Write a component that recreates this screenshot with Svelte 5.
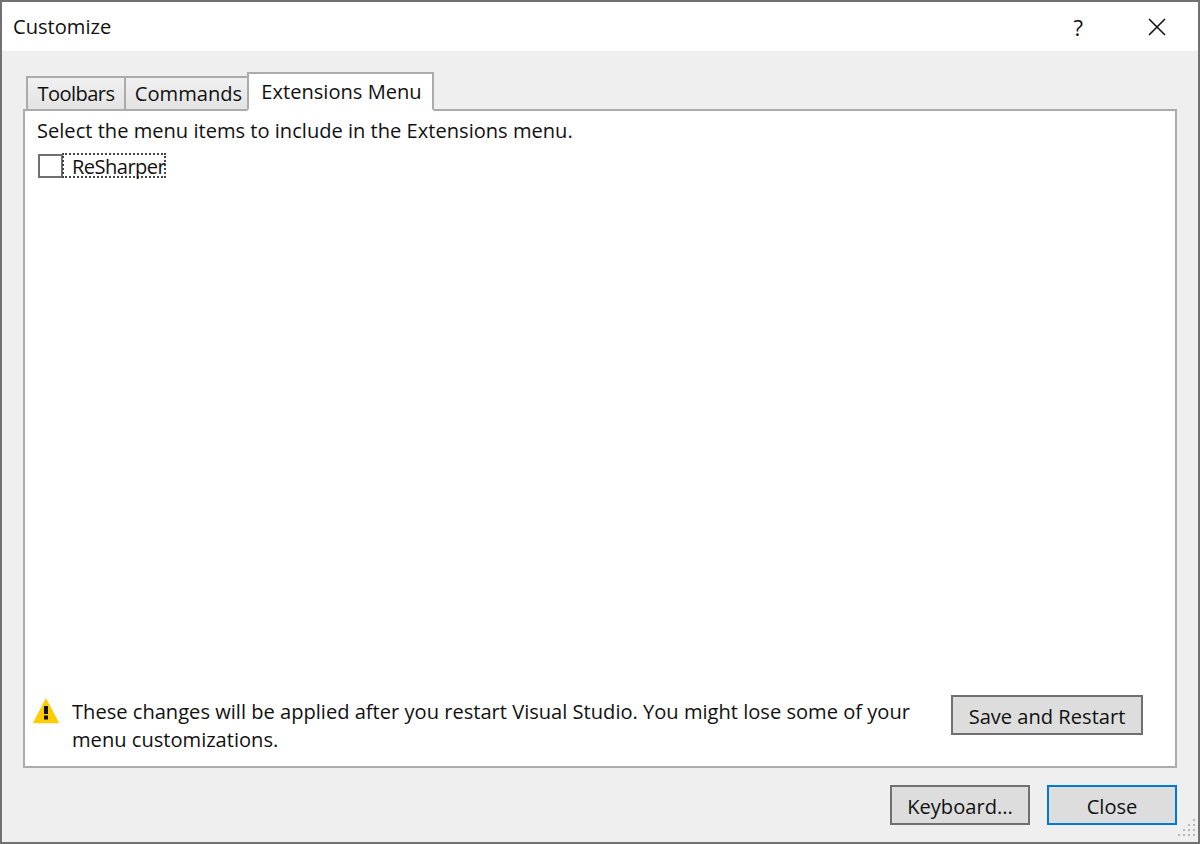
<script>
	let checked = $state(false);
	let tab = $state('Extensions Menu');
	const tabs = ['Toolbars', 'Commands', 'Extensions Menu'];
</script>

<div class="window">
	<div class="titlebar">
		<span class="title">Customize</span>
		<span class="help">?</span>
		<svg class="close-x" width="18" height="18" viewBox="0 0 18 18">
			<path d="M1 1L17 17M17 1L1 17" stroke="#111" stroke-width="1.6" fill="none" />
		</svg>
	</div>
	<div class="body">
		<div class="tabs">
			{#each tabs as t, i}
				<button class="tab t{i}" class:active={tab === t} onclick={() => (tab = t)}>{t}</button>
			{/each}
		</div>
		<div class="panel">
			<p class="hint">Select the menu items to include in the Extensions menu.</p>
			<label class="check">
				<input type="checkbox" bind:checked />
				<span class="box"></span>
				<span class="focus">ReSharper</span>
			</label>
			<div class="spacer"></div>
			<div class="notice">
				<svg class="warn" width="26" height="26" viewBox="0 0 26 26">
					<path d="M13 1.5L25 24.5H1Z" fill="#fc0" stroke="#fc0" stroke-width="1.5" stroke-linejoin="round" />
					<rect x="11" y="8" width="4" height="8" fill="#111" />
					<rect x="11" y="17.5" width="4" height="4" fill="#111" />
				</svg>
				<p class="message">These changes will be applied after you restart Visual Studio. You might lose some of your menu customizations.</p>
				<button class="btn save">Save and Restart</button>
			</div>
		</div>
		<div class="footer">
			<button class="btn keyboard">Keyboard...</button>
			<button class="btn close">Close</button>
		</div>
		<svg class="grip" width="24" height="24" viewBox="0 0 24 24" fill="#b9b9b9">
			<rect x="19" y="1" width="2" height="2" />
			<rect x="14" y="6" width="2" height="2" /><rect x="19" y="6" width="2" height="2" />
			<rect x="9" y="11" width="2" height="2" /><rect x="14" y="11" width="2" height="2" /><rect x="19" y="11" width="2" height="2" />
			<rect x="4" y="16" width="2" height="2" /><rect x="9" y="16" width="2" height="2" /><rect x="14" y="16" width="2" height="2" /><rect x="19" y="16" width="2" height="2" />
		</svg>
	</div>
</div>

<style>
	:global(body) {
		margin: 0;
		background: #efefef;
	}
	.window {
		width: 1200px;
		height: 844px;
		box-sizing: border-box;
		border: 2px solid #717171;
		display: flex;
		flex-direction: column;
		font-family: 'Open Sans', 'Noto Sans', sans-serif;
		font-size: 20.1px;
		color: #111;
		overflow: hidden;
	}
	.titlebar {
		height: 49px;
		flex: none;
		background: #fff;
		display: flex;
		align-items: center;
		padding: 0 32px 0 11px;
	}
	.title {
		flex: 1;
	}
	.help {
		font-size: 22px;
		margin-right: 65px;
	}
	.body {
		flex: 1;
		position: relative;
		display: flex;
		flex-direction: column;
		padding: 21px 21px 0;
		background: #efefef;
	}
	.tabs {
		display: flex;
		align-items: flex-end;
		height: 39px;
		padding-left: 3px;
		margin-bottom: -2px;
		position: relative;
		z-index: 1;
	}
	button {
		font: inherit;
		color: inherit;
		cursor: pointer;
	}
	.tab {
		height: 35px;
		padding: 0;
		border: 2px solid #ababab;
		border-right-width: 0;
		background: linear-gradient(#f0f0f0, #e3e3e3);
		line-height: 32px;
		white-space: nowrap;
	}
	.t0 {
		width: 98px;
		letter-spacing: -0.6px;
	}
	.t1 {
		width: 123px;
		padding-left: 4px;
	}
	.t2 {
		width: 187px;
	}
	.tab.active {
		height: 39px;
		padding: 0 0 0 2px;
		background: #fff;
		border-right-width: 2px;
		border-bottom-color: #fff;
	}
	.panel {
		height: 659px;
		box-sizing: border-box;
		background: #fff;
		border: 2px solid #ababab;
		padding: 6px 12px 0;
		display: flex;
		flex-direction: column;
	}
	.hint {
		margin: 0;
		line-height: 28px;
	}
	.check {
		display: flex;
		align-items: center;
		margin-top: 8px;
		height: 25px;
	}
	.check input {
		position: absolute;
		opacity: 0;
	}
	.box {
		width: 21px;
		height: 20px;
		margin-left: 1px;
		border: 2px solid #707070;
		background: #fff;
		flex: none;
	}
	.focus {
		box-sizing: border-box;
		padding: 0 0 0 8px;
		height: 25px;
		line-height: 24px;
		border: 2px dotted #444;
		width: 104px;
		margin-left: -1px;
		white-space: nowrap;
		letter-spacing: -0.55px;
	}
	.spacer {
		flex: 1;
	}
	.notice {
		display: flex;
		align-items: flex-start;
		padding-bottom: 12px;
	}
	.warn {
		flex: none;
		margin: 3px 13px 0 -4px;
	}
	.message {
		margin: 0;
		padding-top: 3px;
		width: 860px;
		line-height: 28px;
	}
	.btn {
		height: 40px;
		padding: 2px 0 0;
		background: #dddddd;
		border: 2px solid #707070;
	}
	.save {
		width: 192px;
		margin: 0 0 0 19px;
	}
	.footer {
		display: flex;
		justify-content: flex-end;
		gap: 17px;
		padding-top: 17px;
	}
	.keyboard {
		width: 140px;
	}
	.close {
		width: 130px;
		border-color: #0078d7;
	}
	.grip {
		position: absolute;
		right: 0;
		bottom: 0;
	}
</style>
